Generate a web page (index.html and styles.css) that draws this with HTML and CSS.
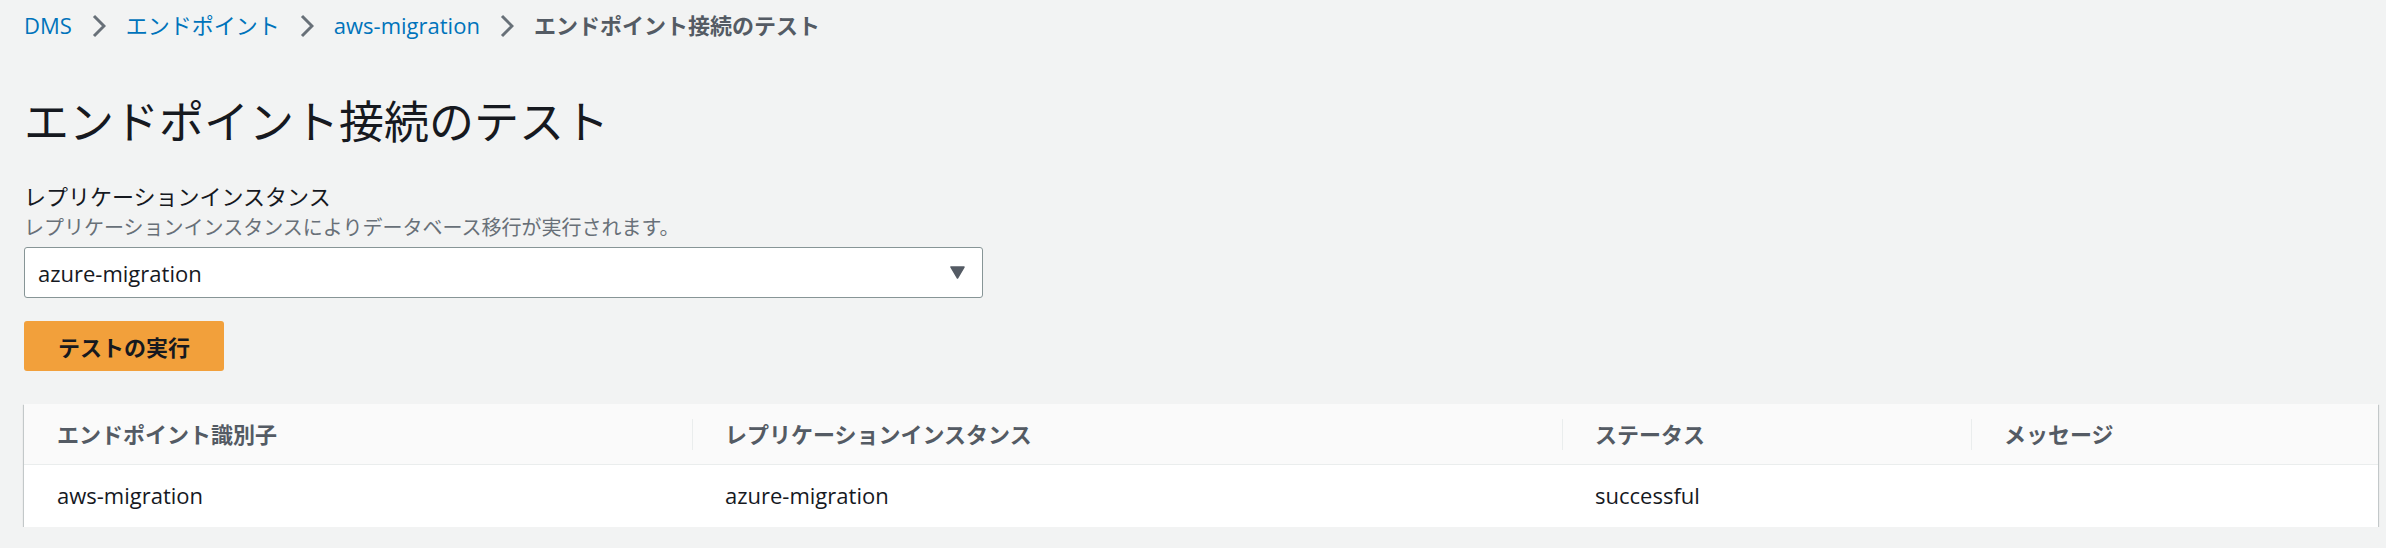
FILE: index.html
```html
<!DOCTYPE html>
<html lang="ja">
<head>
  <meta charset="UTF-8">
  <meta name="viewport" content="width=device-width, initial-scale=1.0">
  <title>エンドポイント接続のテスト</title>
  <link rel="stylesheet" href="styles.css">
</head>
<body>
  <nav class="breadcrumbs">
    <a href="#">DMS</a>
    <svg class="crumb-sep" viewBox="0 0 14 24"><polyline points="2,2 12,12 2,22" /></svg>
    <a href="#">エンドポイント</a>
    <svg class="crumb-sep" viewBox="0 0 14 24"><polyline points="2,2 12,12 2,22" /></svg>
    <a href="#">aws-migration</a>
    <svg class="crumb-sep" viewBox="0 0 14 24"><polyline points="2,2 12,12 2,22" /></svg>
    <span class="current">エンドポイント接続のテスト</span>
  </nav>

  <h1>エンドポイント接続のテスト</h1>

  <div class="field">
    <label class="field-label">レプリケーションインスタンス</label>
    <p class="field-desc">レプリケーションインスタンスによりデータベース移行が実行されます。</p>
    <div class="select">
      <span>azure-migration</span>
      <svg class="caret" viewBox="0 0 15 13"><polygon points="1,1 14,1 7.5,12" /></svg>
    </div>
  </div>

  <button class="btn-primary">テストの実行</button>

  <div class="table-card">
    <table>
      <colgroup>
        <col class="col-id">
        <col class="col-instance">
        <col class="col-status">
        <col>
      </colgroup>
      <thead>
        <tr>
          <th>エンドポイント識別子</th>
          <th>レプリケーションインスタンス</th>
          <th>ステータス</th>
          <th>メッセージ</th>
        </tr>
      </thead>
      <tbody>
        <tr>
          <td>aws-migration</td>
          <td>azure-migration</td>
          <td>successful</td>
          <td></td>
        </tr>
      </tbody>
    </table>
  </div>
</body>
</html>
```

FILE: styles.css
```css
body {
  margin: 0;
  padding: 9px 8px 0 24px;
  background-color: #f2f3f3;
  font-family: "Open Sans", "Noto Sans CJK JP", sans-serif;
  color: #16191f;
}

/* breadcrumbs */
.breadcrumbs {
  display: flex;
  align-items: center;
  gap: 20px;
  font-size: 22px;
  line-height: 33px;
}

.breadcrumbs a {
  color: #0073bb;
  text-decoration: none;
}

.crumb-sep {
  width: 14px;
  height: 24px;
  fill: none;
  stroke: #687078;
  stroke-width: 3;
}

.current {
  font-weight: bold;
  color: #545b64;
}

h1 {
  margin: 50px 0 0;
  font-size: 45px;
  line-height: 60px;
  font-weight: normal;
}

/* form field */
.field {
  margin-top: 28px;
}

.field-label {
  display: block;
  font-size: 22px;
  line-height: 33px;
}

.field-desc {
  margin: 0;
  font-size: 20px;
  line-height: 29px;
  color: #687078;
}

.select {
  margin-top: 5px;
  width: 959px;
  height: 51px;
  box-sizing: border-box;
  display: flex;
  align-items: center;
  justify-content: space-between;
  padding: 0 17px 0 13px;
  border: 1px solid #879596;
  border-radius: 3px;
  background-color: #fff;
  font-size: 22px;
}

.caret {
  width: 15px;
  height: 13px;
  fill: #545b64;
  stroke: #545b64;
  stroke-width: 1.5;
  stroke-linejoin: round;
}

.btn-primary {
  display: block;
  margin-top: 23px;
  height: 50px;
  padding: 0 34px;
  border: none;
  border-radius: 3px;
  background-color: #f2a03b;
  font-family: inherit;
  font-size: 22px;
  font-weight: bold;
  color: #16191f;
}

/* results table */
.table-card {
  margin-top: 33px;
  background-color: #fff;
  box-shadow: 0 1px 1px 0 rgba(0, 28, 36, 0.3), 1px 1px 1px 0 rgba(0, 28, 36, 0.15), -1px 1px 1px 0 rgba(0, 28, 36, 0.15);
}

table {
  width: 100%;
  border-collapse: separate;
  border-spacing: 0;
  table-layout: fixed;
}

.col-id {
  width: 668px;
}

.col-instance {
  width: 870px;
}

.col-status {
  width: 409px;
}

th, td {
  padding-left: 33px;
  text-align: left;
  font-size: 22px;
  line-height: 33px;
}

th {
  padding-top: 14px;
  padding-bottom: 13px;
  background-color: #fafafa;
  border-bottom: 1px solid #eaeded;
  font-weight: bold;
  color: #545b64;
}

th + th {
  background-image: linear-gradient(#eaeded, #eaeded);
  background-size: 1px 31px;
  background-position: left center;
  background-repeat: no-repeat;
}

td {
  padding-top: 14px;
  padding-bottom: 15px;
}
```
